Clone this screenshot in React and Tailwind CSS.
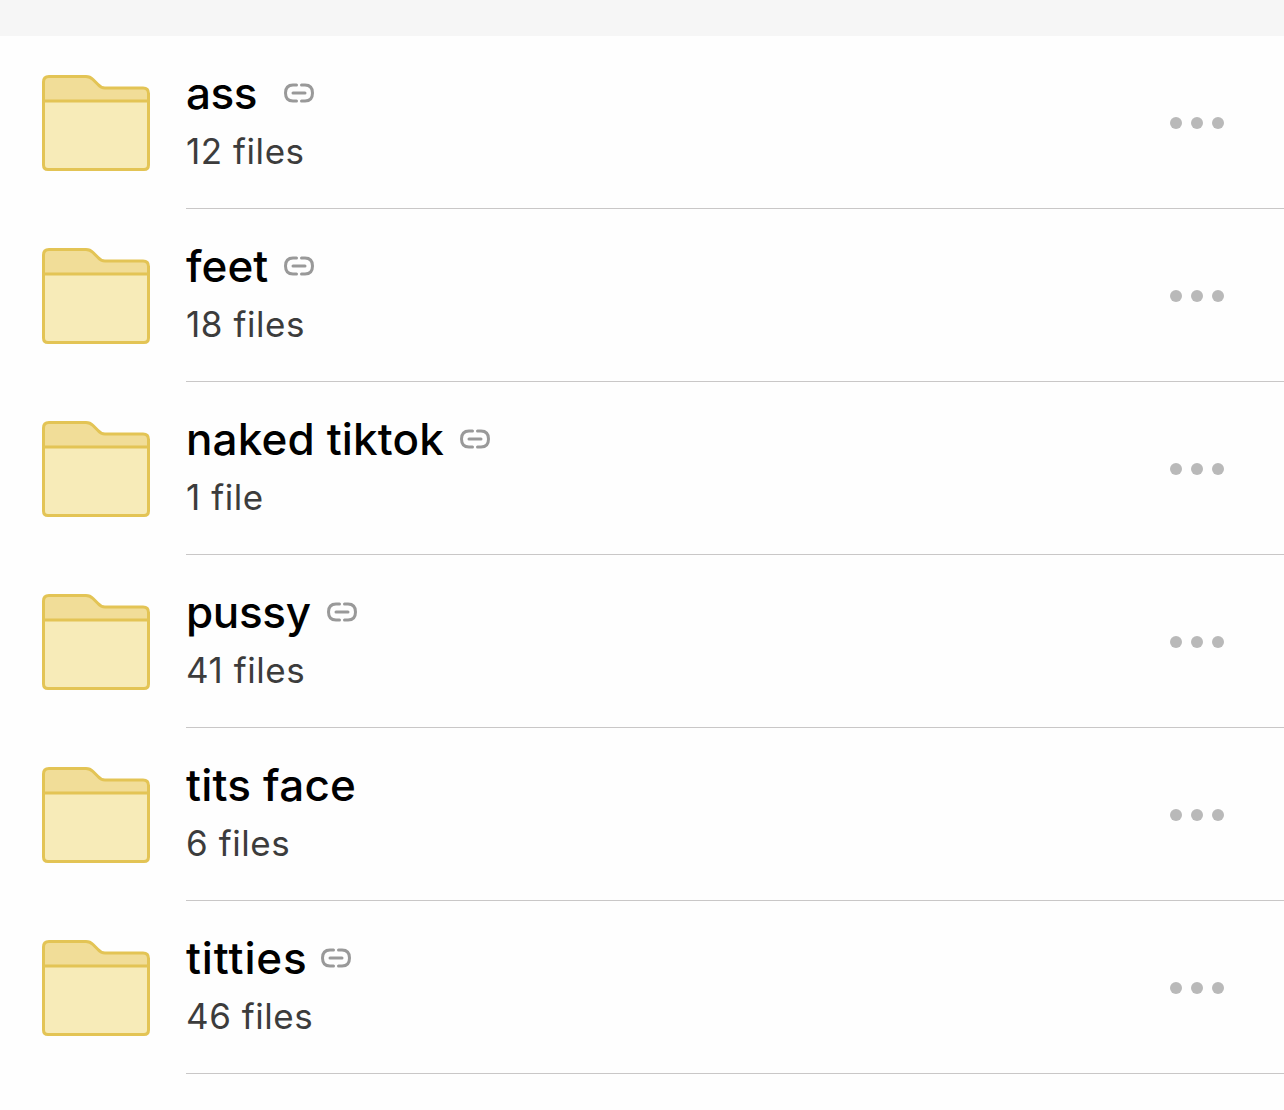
const folders = [
  { name: "ass", count: "12 files", linked: true, gap: "ml-[27px]", track: "tracking-[-0.5px]" },
  { name: "feet", count: "18 files", linked: true, gap: "ml-4", track: "tracking-[0.05px]" },
  { name: "naked tiktok", count: "1 file", linked: true, gap: "ml-4", track: "tracking-[0.15px]" },
  { name: "pussy", count: "41 files", linked: true, gap: "ml-4", track: "tracking-[-0.35px]" },
  { name: "tits face", count: "6 files", linked: false, gap: "", track: "tracking-[0.2px]" },
  { name: "titties", count: "46 files", linked: true, gap: "ml-[13px]", track: "tracking-[0.9px]" },
];

function FolderIcon() {
  return (
    <svg width="108" height="96" viewBox="0 0 108 96" className="shrink-0">
      <path
        d="M1.5 7 Q1.5 1.5 7 1.5 L44 1.5 Q48 1.5 51 4.5 L56 9.5 Q59 13 63 13 L101 13 Q106.5 13 106.5 18.5 L106.5 26 L1.5 26 Z"
        fill="#f1dd98"
      />
      <path
        d="M1.5 26 L106.5 26 L106.5 90 Q106.5 94.5 102 94.5 L6 94.5 Q1.5 94.5 1.5 90 Z"
        fill="#f7ebb8"
      />
      <path
        d="M7 1.5 L44 1.5 Q48 1.5 51 4.5 L56 9.5 Q59 13 63 13 L101 13 Q106.5 13 106.5 18.5 L106.5 90 Q106.5 94.5 102 94.5 L6 94.5 Q1.5 94.5 1.5 90 L1.5 7 Q1.5 1.5 7 1.5 Z M1.5 26 L106.5 26"
        fill="none"
        stroke="#e3c455"
        strokeWidth="3"
      />
    </svg>
  );
}

function LinkIcon() {
  return (
    <svg width="30" height="20" viewBox="0 0 30 20" fill="none" stroke="#999999" strokeWidth="3" strokeLinecap="round" className="shrink-0">
      <path d="M12.5 2 L9 2 Q1.5 2 1.5 10 Q1.5 18 9 18 L12.5 18" />
      <path d="M17.5 2 L21 2 Q28.5 2 28.5 10 Q28.5 18 21 18 L17.5 18" />
      <path d="M9 10 L21 10" />
    </svg>
  );
}

function Row({ item }) {
  return (
    <div className="flex pl-[42px]">
      <div className="pt-[39px]">
        <FolderIcon />
      </div>
      <div className="ml-[36px] flex h-[173px] flex-1 items-center justify-between border-b border-[#c9c7c7] pr-[60px]">
        <div className="flex flex-col">
          <div className="flex h-[58px] items-center pb-[2px]">
            <span className={`text-[44px] leading-none font-[450] text-black ${item.track}`}>{item.name}</span>
            {item.linked && (
              <span className={item.gap}>
                <LinkIcon />
              </span>
            )}
          </div>
          <div className="text-[35px] leading-[56px] tracking-[0.55px] text-[#3c3c3c]">{item.count}</div>
        </div>
        <div className="mt-[2px] flex gap-[9px]">
          <span className="h-3 w-3 rounded-full bg-[#b9b9b9]" />
          <span className="h-3 w-3 rounded-full bg-[#b9b9b9]" />
          <span className="h-3 w-3 rounded-full bg-[#b9b9b9]" />
        </div>
      </div>
    </div>
  );
}

export default function App() {
  return (
    <div className="h-[1110px] w-[1284px] overflow-hidden bg-[#fefefe] font-['Inter',sans-serif]">
      <div className="h-9 bg-[#f6f6f6]" />
      {folders.map((item) => (
        <Row key={item.name} item={item} />
      ))}
    </div>
  );
}
